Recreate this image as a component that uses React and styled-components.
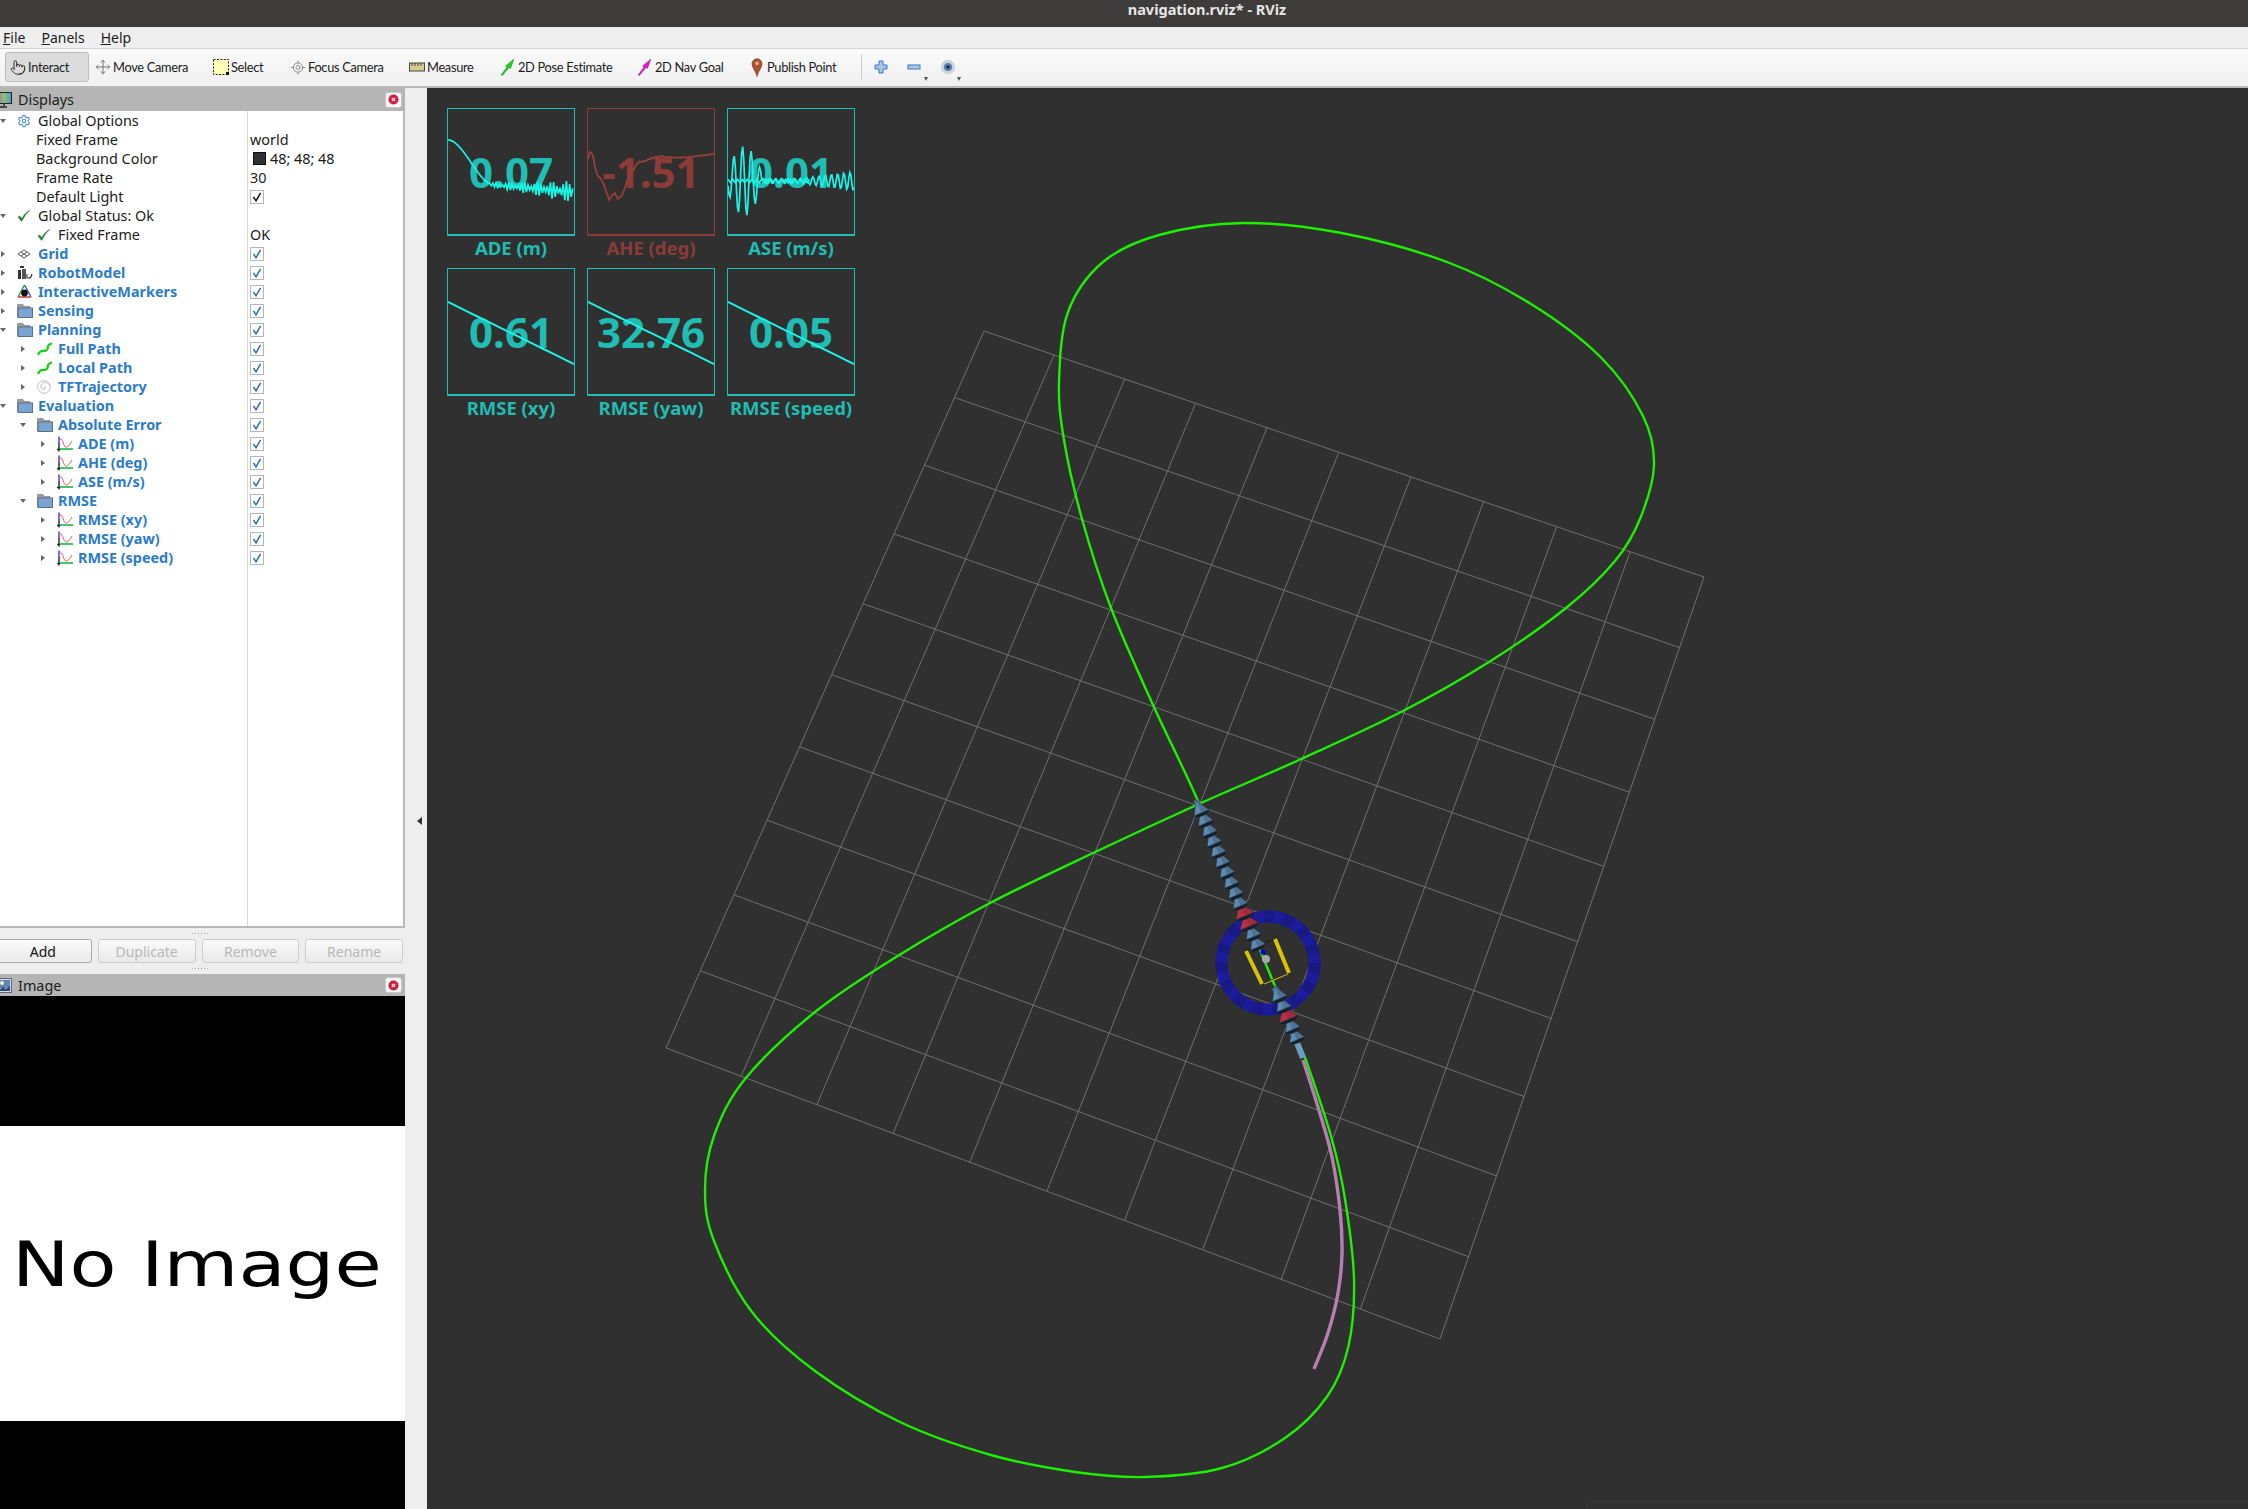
import React from "react";
import styled, { createGlobalStyle } from "styled-components";
import { Pointer, Move, LocateFixed, Settings } from "lucide-react";

const FONT = '"Noto Sans", "Open Sans", sans-serif';

const GlobalStyle = createGlobalStyle`
  html, body { margin: 0; padding: 0; width: 2248px; height: 1509px; overflow: hidden; background: #303030; }
  * { box-sizing: border-box; }
`;

/* ---------- data ---------- */

const TOOLS = [
  { name: "Interact", icon: "hand", w: 84, active: true },
  { name: "Move Camera", icon: "move", w: 118 },
  { name: "Select", icon: "select", w: 77 },
  { name: "Focus Camera", icon: "focus", w: 119 },
  { name: "Measure", icon: "measure", w: 91 },
  { name: "2D Pose Estimate", icon: "pose", w: 137 },
  { name: "2D Nav Goal", icon: "nav", w: 112 },
  { name: "Publish Point", icon: "pin", w: 113 },
];

const ROWS = [
  { label: "Global Options", arrow: "down", icon: "gear" },
  { label: "Fixed Frame", value: "world", plain: true },
  { label: "Background Color", swatch: "48; 48; 48", plain: true },
  { label: "Frame Rate", value: "30", plain: true },
  { label: "Default Light", check: "black", plain: true },
  { label: "Global Status: Ok", arrow: "down", icon: "ok" },
  { label: "Fixed Frame", depth: 1, icon: "ok", value: "OK", noArrow: true },
  { label: "Grid", arrow: "right", icon: "grid", on: true },
  { label: "RobotModel", arrow: "right", icon: "robot", on: true },
  { label: "InteractiveMarkers", arrow: "right", icon: "markers", on: true },
  { label: "Sensing", arrow: "right", icon: "folder", on: true },
  { label: "Planning", arrow: "down", icon: "folder", on: true },
  { label: "Full Path", depth: 1, arrow: "right", icon: "path", on: true },
  { label: "Local Path", depth: 1, arrow: "right", icon: "path", on: true },
  { label: "TFTrajectory", depth: 1, arrow: "right", icon: "spiral", on: true },
  { label: "Evaluation", arrow: "down", icon: "folder", on: true },
  { label: "Absolute Error", depth: 1, arrow: "down", icon: "folder", on: true },
  { label: "ADE (m)", depth: 2, arrow: "right", icon: "plot", on: true },
  { label: "AHE (deg)", depth: 2, arrow: "right", icon: "plot", on: true },
  { label: "ASE (m/s)", depth: 2, arrow: "right", icon: "plot", on: true },
  { label: "RMSE", depth: 1, arrow: "down", icon: "folder", on: true },
  { label: "RMSE (xy)", depth: 2, arrow: "right", icon: "plot", on: true },
  { label: "RMSE (yaw)", depth: 2, arrow: "right", icon: "plot", on: true },
  { label: "RMSE (speed)", depth: 2, arrow: "right", icon: "plot", on: true },
];

const TEAL = "#1fbdb3";
const RED = "#8c3b38";

const smooth = (t) => t * t * (3 - 2 * t);

const adeLine = () => {
  const pts = [];
  let i = 0;
  for (let x = 0; x <= 126; x += 1.6, i++) {
    const center = x < 46 ? 31 + 45 * smooth(x / 46) : 76 + ((x - 46) / 80) * 7;
    const amp = x < 36 ? 0 : 1 + ((x - 36) / 90) * 10;
    pts.push([x, center + (i % 2 ? 1 : -1) * amp * (0.65 + 0.35 * Math.sin(i * 0.7))]);
  }
  return pts;
};

const aheLine = () => {
  const knots = [[0, 50], [2, 43], [5, 47], [8, 62], [10, 67], [14, 72], [18, 82], [21, 91], [24, 86], [27, 84], [30, 90], [33, 88], [38, 75], [44, 62], [50, 54], [55, 52], [60, 50], [75, 47], [95, 48], [126, 44]];
  const pts = [];
  knots.forEach(([x, y], k) => {
    if (k > 0) {
      const [px, py] = knots[k - 1];
      for (let s = px + 2; s < x; s += 2) {
        const m = (s - px) / (x - px);
        pts.push([s, py + (y - py) * m + (Math.round(s) % 4 ? 0.9 : -0.9)]);
      }
    }
    pts.push([x, y]);
  });
  return pts;
};

const aseLine = () => {
  const pts = [];
  for (let x = 0; x <= 126; x += 1.05) {
    let amp = 2.5;
    if (x < 34) amp = 8 + 27 * Math.sin((Math.PI * Math.min(x + 2, 34)) / 36);
    else if (x > 72) amp = 2.5 + ((x - 72) / 54) * 7;
    pts.push([x, 72 + amp * Math.sin((2 * Math.PI * x) / (x < 34 ? 8.6 : 6.2) + 0.4)]);
  }
  return pts;
};

const aseFlat = () => {
  const pts = [];
  for (let x = 0; x <= 82; x += 2.4) pts.push([x, 72 + (Math.round(x / 2.4) % 2 ? 1.6 : -1.6)]);
  return pts;
};

const slopeLine = () => {
  const pts = [];
  for (let x = 0; x <= 126; x += 6) pts.push([x, 33 + (x * 62) / 126]);
  return pts;
};

const PLOTS = [
  { label: "ADE (m)", value: "0.07", color: TEAL, line: "#1af5e6", lines: [adeLine()] },
  { label: "AHE (deg)", value: "-1.51", color: RED, line: "#9a3f3a", lines: [aheLine()] },
  { label: "ASE (m/s)", value: "0.01", color: TEAL, line: "#1af5e6", lines: [aseLine(), aseFlat()] },
  { label: "RMSE (xy)", value: "0.61", color: TEAL, line: "#1af5e6", lines: [slopeLine()], thick: true },
  { label: "RMSE (yaw)", value: "32.76", color: TEAL, line: "#1af5e6", lines: [slopeLine()], thick: true },
  { label: "RMSE (speed)", value: "0.05", color: TEAL, line: "#1af5e6", lines: [slopeLine()], thick: true },
];

/* ---------- 3D scene geometry (page coordinates) ---------- */

const GRID_QUAD = [[984, 331], [1704, 577], [1440, 1339], [666, 1048]];

const homography = ([[x0, y0], [x1, y1], [x2, y2], [x3, y3]]) => {
  const dx1 = x1 - x2, dx2 = x3 - x2, sx = x0 - x1 + x2 - x3;
  const dy1 = y1 - y2, dy2 = y3 - y2, sy = y0 - y1 + y2 - y3;
  const den = dx1 * dy2 - dx2 * dy1;
  const g = (sx * dy2 - dx2 * sy) / den;
  const h = (dx1 * sy - sx * dy1) / den;
  const a = x1 - x0 + g * x1, b = x3 - x0 + h * x3;
  const d = y1 - y0 + g * y1, e = y3 - y0 + h * y3;
  return (u, v) => {
    const w = g * u + h * v + 1;
    return [(a * u + b * v + x0) / w, (d * u + e * v + y0) / w];
  };
};

const gridLines = () => {
  const map = homography(GRID_QUAD);
  const out = [];
  for (let i = 0; i <= 10; i++) {
    out.push([map(i / 10, 0), map(i / 10, 1)]);
    out.push([map(0, i / 10), map(1, i / 10)]);
  }
  return out;
};

const spline = (pts) => {
  let d = `M${pts[0][0]} ${pts[0][1]}`;
  for (let i = 0; i < pts.length - 1; i++) {
    const p0 = pts[Math.max(i - 1, 0)], p1 = pts[i], p2 = pts[i + 1], p3 = pts[Math.min(i + 2, pts.length - 1)];
    const c1 = [p1[0] + (p2[0] - p0[0]) / 6, p1[1] + (p2[1] - p0[1]) / 6];
    const c2 = [p2[0] - (p3[0] - p1[0]) / 6, p2[1] - (p3[1] - p1[1]) / 6];
    d += ` C${c1[0].toFixed(1)} ${c1[1].toFixed(1)} ${c2[0].toFixed(1)} ${c2[1].toFixed(1)} ${p2[0]} ${p2[1]}`;
  }
  return d;
};

const GREEN_PATH = [
  [1306, 1060], [1252, 931], [1198, 801], [1153.5, 706], [1111, 608], [1082, 519], [1064, 440], [1059, 382], [1068, 312],
  [1103, 262], [1159, 235], [1243, 223], [1341.5, 233], [1447, 262], [1531, 304], [1601, 357.5], [1643, 416],
  [1654, 465], [1640, 519], [1615, 561], [1566, 608], [1489, 662], [1401, 712], [1299, 760], [1201, 803],
  [1099.5, 850], [991, 902.5], [896, 957], [815, 1012], [745, 1079], [714, 1136], [705, 1190], [714, 1241],
  [752, 1312], [815, 1371], [900, 1422], [991, 1455], [1075, 1472], [1145, 1477], [1222, 1468], [1285, 1438],
  [1327.5, 1396], [1348.5, 1346], [1354, 1279], [1345, 1199], [1331, 1136], [1306, 1060],
];

const PINK_PATH = [[1303, 1060], [1318, 1107], [1332, 1157], [1340, 1210], [1342, 1253], [1338, 1293], [1328, 1333], [1314, 1369]];

const ARROW_A = [1196, 800];
const ARROW_B = [1298, 1042];

const arrowCones = () => {
  const dx = ARROW_B[0] - ARROW_A[0], dy = ARROW_B[1] - ARROW_A[1];
  const len = Math.hypot(dx, dy);
  const ux = dx / len, uy = dy / len;
  const cones = [];
  for (let s = 0; s < len - 8; s += 11.2) {
    // the robot body hides the middle of the chain
    if (s > 146 && s < 196) continue;
    const tip = [ARROW_A[0] + ux * s, ARROW_A[1] + uy * s];
    const base = [tip[0] + ux * 14, tip[1] + uy * 14];
    const red = (s > 106 && s < 125) || (s > 216 && s < 232);
    cones.push({ tip, base, red, key: s });
  }
  return { cones: cones.reverse(), ux, uy };
};

/* ---------- layout ---------- */

const Page = styled.div`
  width: 2248px;
  height: 1509px;
  display: flex;
  flex-direction: column;
  font-family: ${FONT};
  color: #1c1c1c;
  background: #efefef;
`;

const TitleBar = styled.div`
  height: 27px;
  flex: none;
  background: #3d3c3a;
  color: #e6e6e6;
  font-size: 14.5px;
  font-weight: 700;
  line-height: 18px;
  text-align: center;
  padding-left: 166px;
`;

const MenuBar = styled.div`
  height: 22px;
  flex: none;
  display: flex;
  align-items: center;
  gap: 16px;
  padding: 0 0 1px 3px;
  background: #efefef;
  border-bottom: 1px solid #d4d4d4;
  font-size: 14px;
`;

const Toolbar = styled.div`
  height: 39px;
  flex: none;
  display: flex;
  align-items: center;
  padding: 0 0 1px 5px;
  background: linear-gradient(#fafafa, #f0f0f0);
  border-bottom: 2px solid #b9b9b9;
`;

const ToolButton = styled.div`
  width: ${(p) => p.$w}px;
  height: 30px;
  flex: none;
  display: flex;
  align-items: center;
  gap: 2px;
  padding-left: ${(p) => (p.$active ? 4 : 5)}px;
  font-family: Lato, "Noto Sans", sans-serif;
  font-size: 12.8px;
  letter-spacing: -0.3px;
  white-space: nowrap;
  border: 1px solid ${(p) => (p.$active ? "#bdbdbd" : "transparent")};
  border-radius: 3px;
  background: ${(p) => (p.$active ? "#dcdcdc" : "transparent")};
`;

const ToolIcon = styled.span`
  width: 16px;
  height: 20px;
  flex: none;
  display: flex;
  align-items: center;
  justify-content: center;
`;

const ToolSeparator = styled.div`
  width: 1px;
  height: 26px;
  margin: 0 8px 0 5px;
  background: #cfcfcf;
`;

const ViewButton = styled.div`
  width: 33px;
  height: 30px;
  flex: none;
  position: relative;
  display: flex;
  align-items: center;
  padding-left: 4px;
`;

const DropMark = styled.span`
  position: absolute;
  right: 8px;
  bottom: 1px;
  border-left: 2.5px solid transparent;
  border-right: 2.5px solid transparent;
  border-top: 4px solid #555;
`;

const Main = styled.div`
  flex: 1;
  min-height: 0;
  display: flex;
`;

const Side = styled.div`
  width: 405px;
  flex: none;
  display: flex;
  flex-direction: column;
  background: #eeeeee;
`;

const DockStrip = styled.div`
  width: 22px;
  flex: none;
  display: flex;
  align-items: center;
  justify-content: center;
  padding: 0 0 0 6px;
  background: #eeeeee;
`;

const CollapseArrow = styled.span`
  margin-top: 44px;
  border-top: 4px solid transparent;
  border-bottom: 4px solid transparent;
  border-right: 5px solid #333;
`;

const DockHeader = styled.div`
  height: ${(p) => p.$h}px;
  flex: none;
  display: flex;
  align-items: center;
  gap: 6px;
  padding: 0 3px 0 0;
  background: #b5b5b5;
  font-size: 14.4px;
  overflow: hidden;
`;

const HeaderIcon = styled.span`
  display: flex;
  margin-left: -3px;
`;

const DockTitle = styled.span`
  flex: 1;
`;

const CloseBox = styled.span`
  width: 17px;
  height: 16px;
  flex: none;
  display: flex;
  align-items: center;
  justify-content: center;
  background: #f6f6f6;
  border: 1px solid #c8c8c8;
  border-radius: 3px;
`;

const Tree = styled.div`
  flex: 1;
  min-height: 0;
  display: flex;
  flex-direction: column;
  background: #fff;
  border-right: 2px solid #b9b9b9;
  border-bottom: 2px solid #b9b9b9;
`;

const TreeRow = styled.div`
  height: 19px;
  flex: none;
  display: flex;
  align-items: center;
  font-size: 14.4px;
`;

const TreeFill = styled.div`
  flex: 1;
  width: 248px;
  border-right: 1px solid #d9d9d9;
`;

const NameCell = styled.div`
  width: 248px;
  height: 100%;
  flex: none;
  display: flex;
  align-items: center;
  padding-left: ${(p) => (p.$plain ? 36 : p.$depth * 20)}px;
  border-right: 1px solid #d9d9d9;
  white-space: nowrap;
`;

const ArrowSlot = styled.span`
  width: 17px;
  flex: none;
  display: flex;
  padding-left: ${(p) => (p.$dir === "down" ? 0 : 1)}px;
`;

const Caret = styled.span`
  width: 0;
  height: 0;
  ${(p) =>
    p.$dir === "down"
      ? "border-left: 3.5px solid transparent; border-right: 3.5px solid transparent; border-top: 4px solid #666;"
      : "border-top: 3.5px solid transparent; border-bottom: 3.5px solid transparent; border-left: 4px solid #666;"}
`;

const IconSlot = styled.span`
  width: 21px;
  height: 16px;
  flex: none;
  display: flex;
  align-items: center;
`;

const NameText = styled.span`
  color: ${(p) => (p.$on ? "#2b7bcb" : "#1c1c1c")};
  font-weight: ${(p) => (p.$on ? 700 : 400)};
`;

const ValueCell = styled.div`
  flex: 1;
  display: flex;
  align-items: center;
  gap: 4px;
  padding-left: 2px;
`;

const Swatch = styled.span`
  width: 13px;
  height: 13px;
  margin-left: 3px;
  background: #303030;
  border: 1px solid #111;
`;

const CheckBox = styled.span`
  width: 14px;
  height: 14px;
  display: flex;
  align-items: center;
  justify-content: center;
  background: #fff;
  border: 1px solid #b5b5b5;
`;

const Grip = styled.div`
  height: 11px;
  flex: none;
  display: flex;
  align-items: center;
  justify-content: center;
  gap: 2px;
  padding-right: 5px;
`;

const GripDot = styled.span`
  width: 1px;
  height: 1px;
  background: #aaa;
`;

const ButtonRow = styled.div`
  height: 24px;
  flex: none;
  display: flex;
  gap: 6px;
  margin-left: -6px;
  padding-right: 2px;
`;

const PanelButton = styled.div`
  flex: 1;
  display: flex;
  align-items: center;
  justify-content: center;
  font-size: 14px;
  border-radius: 3px;
  background: linear-gradient(#fbfbfb, #e9e9e9);
  border: 1px solid ${(p) => (p.$off ? "#cdcdcd" : "#a9a9a9")};
  color: ${(p) => (p.$off ? "#b8b8b8" : "#111")};
`;

const ImageDock = styled.div`
  height: 535px;
  flex: none;
  display: flex;
  flex-direction: column;
`;

const Letterbox = styled.div`
  height: ${(p) => p.$h}px;
  flex: none;
  background: #000;
`;

const NoImage = styled.div`
  height: 295px;
  flex: none;
  display: flex;
  align-items: center;
  padding: 0 0 18px 12px;
  background: #fff;
  color: #000;
  overflow: hidden;
`;

const NoImageText = styled.span`
  font-family: "DejaVu Sans", sans-serif;
  font-size: 63px;
  white-space: nowrap;
  transform: scaleX(1.22);
  transform-origin: left center;
`;

const Canvas = styled.div`
  flex: 1;
  position: relative;
  background: #303030;
  overflow: hidden;
  padding: 20px 0 0 20px;
`;

const Scene = styled.svg`
  position: absolute;
  left: 0;
  top: 0;
  width: 1821px;
  height: 1421px;
`;

const PlotGrid = styled.div`
  position: relative;
  display: grid;
  grid-template-columns: repeat(3, 128px);
  grid-auto-rows: 160px;
  column-gap: 12px;
`;

const PlotCell = styled.div`
  display: flex;
  flex-direction: column;
  align-items: center;
  color: ${(p) => p.$color};
`;

const PlotBox = styled.div`
  position: relative;
  width: 128px;
  height: 128px;
  flex: none;
  display: flex;
  align-items: center;
  justify-content: center;
  border: 1px solid ${(p) => p.$color};
  border-bottom-width: 2px;
  font-size: 42px;
  font-weight: 700;
`;

const PlotSvg = styled.svg`
  position: absolute;
  left: 0;
  top: 0;
  width: 126px;
  height: 125px;
  overflow: hidden;
`;

const PlotLabel = styled.div`
  height: 20px;
  margin-top: 1px;
  display: flex;
  align-items: center;
  font-size: 18.5px;
  font-weight: 700;
  white-space: nowrap;
`;

const StatusEdge = styled.div`
  position: absolute;
  left: 1160px;
  right: 0;
  bottom: 0;
  height: 8px;
  border-top: 1px solid #3a3a3a;
  border-left: 1px solid #3a3a3a;
  border-top-left-radius: 6px;
`;

/* ---------- icons ---------- */

const SlantArrow = ({ color }) => (
  <svg width="16" height="18" viewBox="0 0 16 18">
    <path d="M1 17 L7 9 L5.5 8 L14 1 L10.5 10.5 L9 9.5 L2.5 17.5 Z" fill={color} stroke="#222" strokeWidth="0.3" />
  </svg>
);

const ToolGlyph = ({ name }) => {
  switch (name) {
    case "hand":
      return <Pointer size={17} strokeWidth={1.4} color="#222" />;
    case "move":
      return <Move size={16} strokeWidth={1.3} color="#666" />;
    case "select":
      return (
        <svg width="16" height="16" viewBox="0 0 16 16">
          <rect x="0.5" y="0.5" width="15" height="15" fill="#ffffb8" stroke="#222" strokeDasharray="2 1.4" />
          <rect x="13" y="13" width="3" height="3" fill="#111" />
        </svg>
      );
    case "focus":
      return <LocateFixed size={17} strokeWidth={1.3} color="#808080" />;
    case "measure":
      return (
        <svg width="16" height="10" viewBox="0 0 16 10">
          <rect x="0.5" y="1" width="15" height="8" fill="#d9cc93" stroke="#444" />
          <path d="M3 1v3M6 1v3M9 1v3M12 1v3" stroke="#444" />
        </svg>
      );
    case "pose":
      return <SlantArrow color="#12d912" />;
    case "nav":
      return <SlantArrow color="#f010d8" />;
    case "pin":
      return (
        <svg width="12" height="19" viewBox="0 0 12 19">
          <path d="M6 18.5 C5 13 1 10 1 5.7 A5 5 0 0 1 11 5.7 C11 10 7 13 6 18.5 Z" fill="#b0512c" stroke="#6d3018" strokeWidth="0.6" />
          <circle cx="6" cy="5.4" r="1.8" fill="#e8b49c" />
        </svg>
      );
    default:
      return null;
  }
};

const TreeGlyph = ({ name }) => {
  switch (name) {
    case "gear":
      return <Settings size={14} strokeWidth={2} color="#5b8fd6" />;
    case "ok":
      return (
        <svg width="14" height="14" viewBox="0 0 14 14">
          <path d="M1 8 L4.6 12.5 Q7.5 6 13 1 Q7 5 4.8 9.4 L2.6 7 Z" fill="#2c7a33" stroke="#2c7a33" strokeWidth="0.5" />
        </svg>
      );
    case "grid":
      return (
        <svg width="14" height="10" viewBox="0 0 14 10" fill="none" stroke="#444" strokeWidth="0.9">
          <path d="M7 1 L13 5 L7 9 L1 5 Z M4 3 L10 7 M10 3 L4 7" />
        </svg>
      );
    case "robot":
      return (
        <svg width="16" height="15" viewBox="0 0 16 15" fill="none">
          <rect x="3" y="1" width="4" height="2" fill="#333" />
          <rect x="1" y="5" width="3" height="9" fill="#333" />
          <rect x="5" y="4" width="4" height="10" fill="#555" />
          <path d="M10 9 V13 H12 Q14 13 15 9" stroke="#333" strokeWidth="1.1" />
        </svg>
      );
    case "markers":
      return (
        <svg width="15" height="15" viewBox="0 0 15 15" fill="none" strokeWidth="1.4">
          <path d="M7.5 1 L1 13" stroke="#2a9a3a" />
          <path d="M7.5 1 L14 13" stroke="#3050d0" />
          <path d="M1 13 H14" stroke="#d02828" />
          <circle cx="7.5" cy="9" r="3.4" fill="#111" stroke="none" />
        </svg>
      );
    case "folder":
      return (
        <svg width="16" height="15" viewBox="0 0 16 15">
          <path d="M0.5 14 V1.5 H6 L7.5 3.5 H13 V6 H1.5 Z" fill="#9a9a9a" stroke="#777" strokeWidth="0.6" />
          <rect x="1" y="5" width="14.5" height="9.5" fill="#7aa5d2" stroke="#5c6f84" />
        </svg>
      );
    case "path":
      return (
        <svg width="16" height="14" viewBox="0 0 16 14" fill="none">
          <path d="M1 13 Q3 8 7 9 Q11 9 11 4 Q12 2 15 1.5" stroke="#14d214" strokeWidth="2.2" />
        </svg>
      );
    case "spiral":
      return (
        <svg width="14" height="14" viewBox="0 0 14 14" fill="none" stroke="#b0b0b0" strokeWidth="0.8">
          <path d="M7 7 a1.2 1.2 0 0 1 1.6 1.2 a2.6 2.6 0 0 1 -3.8 0.6 a3.9 3.9 0 0 1 1 -5.8 a5.4 5.4 0 0 1 7 2.4" />
          <circle cx="7" cy="7" r="6.3" />
        </svg>
      );
    case "plot":
      return (
        <svg width="16" height="16" viewBox="0 0 16 16" fill="none">
          <path d="M2 0.5 V7" stroke="#1818d0" strokeWidth="1.2" />
          <path d="M2 7 V15.5" stroke="#222" strokeWidth="1.4" />
          <path d="M0 13.5 H3" stroke="#222" strokeWidth="1.4" />
          <path d="M3 13 H16" stroke="#10c040" strokeWidth="1.6" />
          <path d="M2.5 3 Q4.5 1.5 6 6 Q7.5 12 10 11 Q12.5 10 15 5" stroke="#e85050" strokeWidth="0.9" />
        </svg>
      );
    default:
      return null;
  }
};

const CheckMark = ({ color }) => (
  <svg width="10" height="10" viewBox="0 0 10 10" fill="none">
    <path d="M1.5 5 L4 8.8 L8.6 0.8" stroke={color} strokeWidth="1.5" />
  </svg>
);

const CloseDot = () => (
  <svg width="11" height="11" viewBox="0 0 11 11">
    <circle cx="5.5" cy="5.5" r="5" fill="#d01f3c" />
    <path d="M3.8 3.8 L7.2 7.2 M7.2 3.8 L3.8 7.2" stroke="#fff" strokeWidth="1.1" />
  </svg>
);

const MonitorIcon = () => (
  <svg width="15" height="16" viewBox="0 0 15 16">
    <defs>
      <linearGradient id="screen" x1="0" x2="1" y1="0" y2="0">
        <stop offset="0" stopColor="#c06a90" />
        <stop offset="0.5" stopColor="#7fc87a" />
        <stop offset="1" stopColor="#5f8fd0" />
      </linearGradient>
    </defs>
    <rect x="0.5" y="0.5" width="14" height="11" fill="url(#screen)" stroke="#222" />
    <path d="M7 12 V14 M2 15 H10" stroke="#222" strokeWidth="1.4" />
  </svg>
);

const LandscapeIcon = () => (
  <svg width="15" height="15" viewBox="0 0 15 15">
    <rect x="0.5" y="0.5" width="14" height="14" fill="#cfdcec" stroke="#667" />
    <rect x="2" y="2" width="11" height="8" fill="#5f86b8" />
    <circle cx="5" cy="5" r="2" fill="#f2eec8" />
    <path d="M2 12 L6 9 L9 11 L13 8 V13 H2 Z" fill="#2f4a6e" />
  </svg>
);

const PlusIcon = () => (
  <svg width="14" height="14" viewBox="0 0 14 14">
    <path d="M5 1 H9 V5 H13 V9 H9 V13 H5 V9 H1 V5 H5 Z" fill="#a8c6ea" stroke="#3f74b8" />
  </svg>
);

const MinusIcon = () => (
  <svg width="14" height="14" viewBox="0 0 14 14">
    <rect x="1" y="5" width="12" height="4" fill="#a8c6ea" stroke="#3f74b8" />
  </svg>
);

const EyeIcon = () => (
  <svg width="16" height="16" viewBox="0 0 16 16">
    <circle cx="8" cy="8" r="7.2" fill="#cfd3da" />
    <circle cx="8" cy="8" r="4" fill="#5a7fb0" />
    <circle cx="8" cy="8" r="1.8" fill="#1d2f4a" />
  </svg>
);

/* ---------- parts ---------- */

const SplitterGrip = () => (
  <Grip>
    {[0, 1, 2, 3, 4, 5].map((i) => (
      <GripDot key={i} />
    ))}
  </Grip>
);

const Row = ({ row }) => (
  <TreeRow>
    <NameCell $depth={row.depth || 0} $plain={row.plain}>
      {!row.plain && (
        <ArrowSlot $dir={row.arrow}>{!row.noArrow && <Caret $dir={row.arrow} />}</ArrowSlot>
      )}
      {row.icon && (
        <IconSlot>
          <TreeGlyph name={row.icon} />
        </IconSlot>
      )}
      <NameText $on={row.on}>{row.label}</NameText>
    </NameCell>
    <ValueCell>
      {row.value}
      {row.swatch && (
        <>
          <Swatch />
          {row.swatch}
        </>
      )}
      {(row.check || row.on) && (
        <CheckBox>
          <CheckMark color={row.check ? "#111" : "#2a6cb0"} />
        </CheckBox>
      )}
    </ValueCell>
  </TreeRow>
);

const Plot = ({ plot }) => (
  <PlotCell $color={plot.color}>
    <PlotBox $color={plot.color}>
      {plot.value}
      <PlotSvg viewBox="0 0 126 125">
        {plot.lines.map((pts, i) => (
          <polyline
            key={i}
            points={pts.map((p) => p.join(",")).join(" ")}
            fill="none"
            stroke={plot.line}
            strokeWidth={plot.thick ? 2 : 1.7}
          />
        ))}
      </PlotSvg>
    </PlotBox>
    <PlotLabel>{plot.label}</PlotLabel>
  </PlotCell>
);

const Cone = ({ cone, ux, uy }) => {
  const nx = -uy, ny = ux;
  const hw = cone.red ? 10 : 8;
  const [tx, ty] = cone.tip;
  const [bx, by] = cone.base;
  const left = [bx + nx * hw, by + ny * hw];
  const right = [bx - nx * hw, by - ny * hw];
  const angle = (Math.atan2(uy, ux) * 180) / Math.PI;
  const body = cone.red ? "#b83044" : "#5f8ab0";
  const shade = cone.red ? "#7a2030" : "#2e465e";
  return (
    <g>
      <ellipse cx={bx} cy={by} rx="3.4" ry={hw} transform={`rotate(${angle} ${bx} ${by})`} fill="#16202a" />
      <polygon points={`${tx},${ty} ${left[0]},${left[1]} ${right[0]},${right[1]}`} fill={body} stroke="#22303c" strokeWidth="0.6" />
      <polygon points={`${tx},${ty} ${bx},${by} ${right[0]},${right[1]}`} fill={shade} opacity="0.35" />
    </g>
  );
};

const SceneView = () => {
  const { cones, ux, uy } = arrowCones();
  return (
    <Scene viewBox="427 88 1821 1421">
      <g stroke="#707070" strokeWidth="1">
        {gridLines().map(([a, b], i) => (
          <line key={i} x1={a[0]} y1={a[1]} x2={b[0]} y2={b[1]} />
        ))}
      </g>
      <path d={spline(GREEN_PATH)} fill="none" stroke="#1df000" strokeWidth="2.4" />
      <path d={spline(PINK_PATH)} fill="none" stroke="#b57fb2" strokeWidth="3.4" />
      <g opacity="0.94">
        <circle cx="1268" cy="963" r="46.5" fill="none" stroke="#1b1ba2" strokeWidth="12" />
        <circle cx="1268" cy="963" r="46.5" fill="none" stroke="#18188c" strokeWidth="12" strokeDasharray="10 9.5" />
      </g>
      <path d="M1246 951 L1275 939 L1289 973 L1262 984 Z" fill="none" stroke="#1a1a1a" strokeWidth="1" />
      <path d="M1264 984 L1288 974" stroke="#b8a820" strokeWidth="1.2" />
      <g stroke="#d9c400" strokeWidth="4">
        <path d="M1246 951 L1262 984" />
        <path d="M1275 939 L1289 973" />
      </g>
      <circle cx="1266" cy="959" r="4" fill="#a8a8a8" />
      <circle cx="1263" cy="952" r="2.6" fill="#0000d8" />
      <line x1="1196" y1="800" x2="1258" y2="947" stroke="#5a86ad" strokeWidth="5" />
      <line x1="1275" y1="988" x2="1303" y2="1058" stroke="#6b9cc8" strokeWidth="6" />
      {cones.map((c) => (
        <Cone key={c.key} cone={c} ux={ux} uy={uy} />
      ))}
    </Scene>
  );
};

export default function App() {
  return (
    <Page>
      <GlobalStyle />
      <TitleBar>navigation.rviz* - RViz</TitleBar>
      <MenuBar>
        <span><u>F</u>ile</span>
        <span><u>P</u>anels</span>
        <span><u>H</u>elp</span>
      </MenuBar>
      <Toolbar>
        {TOOLS.map((t) => (
          <ToolButton key={t.name} $w={t.w} $active={t.active}>
            <ToolIcon>
              <ToolGlyph name={t.icon} />
            </ToolIcon>
            {t.name}
          </ToolButton>
        ))}
        <ToolSeparator />
        <ViewButton><PlusIcon /></ViewButton>
        <ViewButton><MinusIcon /><DropMark /></ViewButton>
        <ViewButton><EyeIcon /><DropMark /></ViewButton>
      </Toolbar>
      <Main>
        <Side>
          <DockHeader $h={23}>
            <HeaderIcon><MonitorIcon /></HeaderIcon>
            <DockTitle>Displays</DockTitle>
            <CloseBox><CloseDot /></CloseBox>
          </DockHeader>
          <Tree>
            {ROWS.map((r, i) => (
              <Row key={i} row={r} />
            ))}
            <TreeFill />
          </Tree>
          <SplitterGrip />
          <ButtonRow>
            <PanelButton>Add</PanelButton>
            <PanelButton $off>Duplicate</PanelButton>
            <PanelButton $off>Remove</PanelButton>
            <PanelButton $off>Rename</PanelButton>
          </ButtonRow>
          <SplitterGrip />
          <ImageDock>
            <DockHeader $h={22}>
              <HeaderIcon><LandscapeIcon /></HeaderIcon>
              <DockTitle>Image</DockTitle>
              <CloseBox><CloseDot /></CloseBox>
            </DockHeader>
            <Letterbox $h={130} />
            <NoImage>
              <NoImageText>No Image</NoImageText>
            </NoImage>
            <Letterbox $h={88} />
          </ImageDock>
        </Side>
        <DockStrip>
          <CollapseArrow />
        </DockStrip>
        <Canvas>
          <SceneView />
          <PlotGrid>
            {PLOTS.map((p) => (
              <Plot key={p.label} plot={p} />
            ))}
          </PlotGrid>
          <StatusEdge />
        </Canvas>
      </Main>
    </Page>
  );
}
